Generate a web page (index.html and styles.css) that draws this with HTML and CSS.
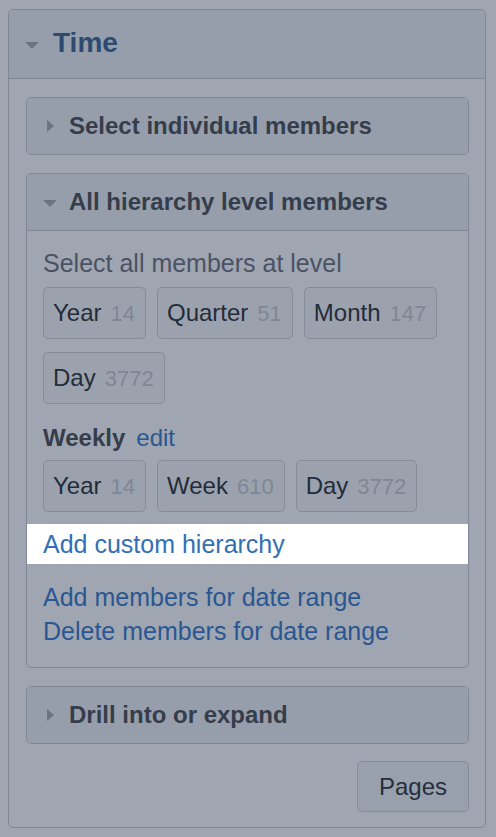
FILE: index.html
```html
<!DOCTYPE html>
<html lang="en">
<head>
<meta charset="utf-8">
<title>Time</title>
<link rel="stylesheet" href="styles.css">
</head>
<body>
<section class="panel">
  <header class="panel-head">
    <span class="tri-down-lg"></span>
    <h1 class="panel-title">Time</h1>
  </header>
  <div class="panel-body">
    <div class="card">
      <div class="card-head collapsed">
        <span class="tri-right"></span>
        <span class="card-title">Select individual members</span>
      </div>
    </div>

    <div class="card">
      <div class="card-head">
        <span class="tri-down"></span>
        <span class="card-title">All hierarchy level members</span>
      </div>
      <div class="card-body">
        <p class="hint">Select all members at level</p>
        <div class="chips">
          <span class="chip">Year<span class="count">14</span></span>
          <span class="chip">Quarter<span class="count">51</span></span>
          <span class="chip">Month<span class="count">147</span></span>
          <span class="chip">Day<span class="count">3772</span></span>
        </div>
        <p class="weekly"><b>Weekly</b><a class="link edit">edit</a></p>
        <div class="chips">
          <span class="chip">Year<span class="count">14</span></span>
          <span class="chip">Week<span class="count">610</span></span>
          <span class="chip">Day<span class="count">3772</span></span>
        </div>
        <div class="highlight"><a class="link hl-link">Add custom hierarchy</a></div>
        <div class="links">
          <a class="link">Add members for date range</a>
          <a class="link">Delete members for date range</a>
        </div>
      </div>
    </div>

    <div class="card">
      <div class="card-head collapsed">
        <span class="tri-right"></span>
        <span class="card-title">Drill into or expand</span>
      </div>
    </div>

    <div class="actions">
      <button class="btn">Pages</button>
    </div>
  </div>
</section>
</body>
</html>
```
FILE: styles.css
```css
* { box-sizing: border-box; }
html, body { margin: 0; padding: 0; }
body {
  background: #9fa6b2;
  font-family: "Liberation Sans", Arial, sans-serif;
  font-size: 24px;
  color: #2a3240;
  padding: 9px 10px 10px 8px;
}
.panel {
  border: 1px solid #7f8795;
  border-radius: 5px;
  overflow: hidden;
}
.panel-head {
  height: 69px;
  background: #979eab;
  border-bottom: 1px solid #7f8795;
  display: flex;
  align-items: center;
  padding-left: 16px;
}
.tri-down-lg {
  width: 0; height: 0;
  border-left: 7.5px solid transparent;
  border-right: 7.5px solid transparent;
  border-top: 7px solid #6c7381;
  margin-right: 14px;
  margin-top: 2px;
}
.panel-title {
  margin: 0;
  font-size: 28px;
  font-weight: bold;
  color: #2d4a71;
  line-height: 32px;
  margin-top: -2px;
}
.panel-body {
  padding: 18px 16px 15px 17px;
  display: flex;
  flex-direction: column;
  gap: 18px;
}
.card {
  border: 1px solid #7f8795;
  border-radius: 5px;
  overflow: hidden;
}
.card-head {
  height: 57px;
  background: #979eab;
  border-bottom: 1px solid #7f8795;
  display: flex;
  align-items: center;
  padding-left: 16px;
}
.card-head.collapsed {
  height: 56px;
  border-bottom: 0;
}
.card-title {
  font-weight: bold;
  color: #353d4b;
  line-height: 30px;
}
.tri-right {
  width: 0; height: 0;
  border-top: 6.5px solid transparent;
  border-bottom: 6.5px solid transparent;
  border-left: 7px solid #6c7381;
  margin-left: 4px;
  margin-right: 15px;
}
.tri-down {
  width: 0; height: 0;
  border-left: 7px solid transparent;
  border-right: 7px solid transparent;
  border-top: 7px solid #6c7381;
  margin-right: 12px;
  margin-top: 2px;
}
.card-body {
  padding: 15px 16px 19px 16px;
}
.hint {
  margin: 0;
  font-size: 25px;
  line-height: 34px;
  color: #4a5263;
}
.chips {
  display: flex;
  flex-wrap: wrap;
  column-gap: 11px;
  row-gap: 13px;
  margin-top: 7px;
}
.chip {
  border: 1px solid #858c99;
  border-radius: 5px;
  background: #9ba2ae;
  line-height: 49px;
  padding: 0 10px 0 9px;
  color: #242c3a;
  white-space: nowrap;
}
.count {
  color: #7f8694;
  font-size: 22px;
  margin-left: 9px;
}
.weekly {
  margin: 17px 0 0;
  line-height: 34px;
  color: #353c4a;
}
.weekly b { font-weight: bold; }
.link {
  color: #2a5791;
  text-decoration: none;
}
.edit { margin-left: 11px; }
.weekly + .chips { margin-top: 5px; }
.highlight {
  margin: 12px -16px 0;
  background: #ffffff;
  height: 40px;
  line-height: 40px;
  padding-left: 16px;
  font-size: 25px;
}
.hl-link { color: #3270b5; }
.links {
  margin-top: 17px;
  display: flex;
  flex-direction: column;
  font-size: 25px;
  line-height: 33.5px;
}
.actions {
  display: flex;
  justify-content: flex-end;
  margin-top: -1px;
}
.btn {
  font-family: inherit;
  font-size: 24px;
  color: #262e3b;
  background: #99a0ad;
  border: 1px solid #858c99;
  border-radius: 5px;
  height: 51px;
  width: 112px;
  padding: 0;
}
```
